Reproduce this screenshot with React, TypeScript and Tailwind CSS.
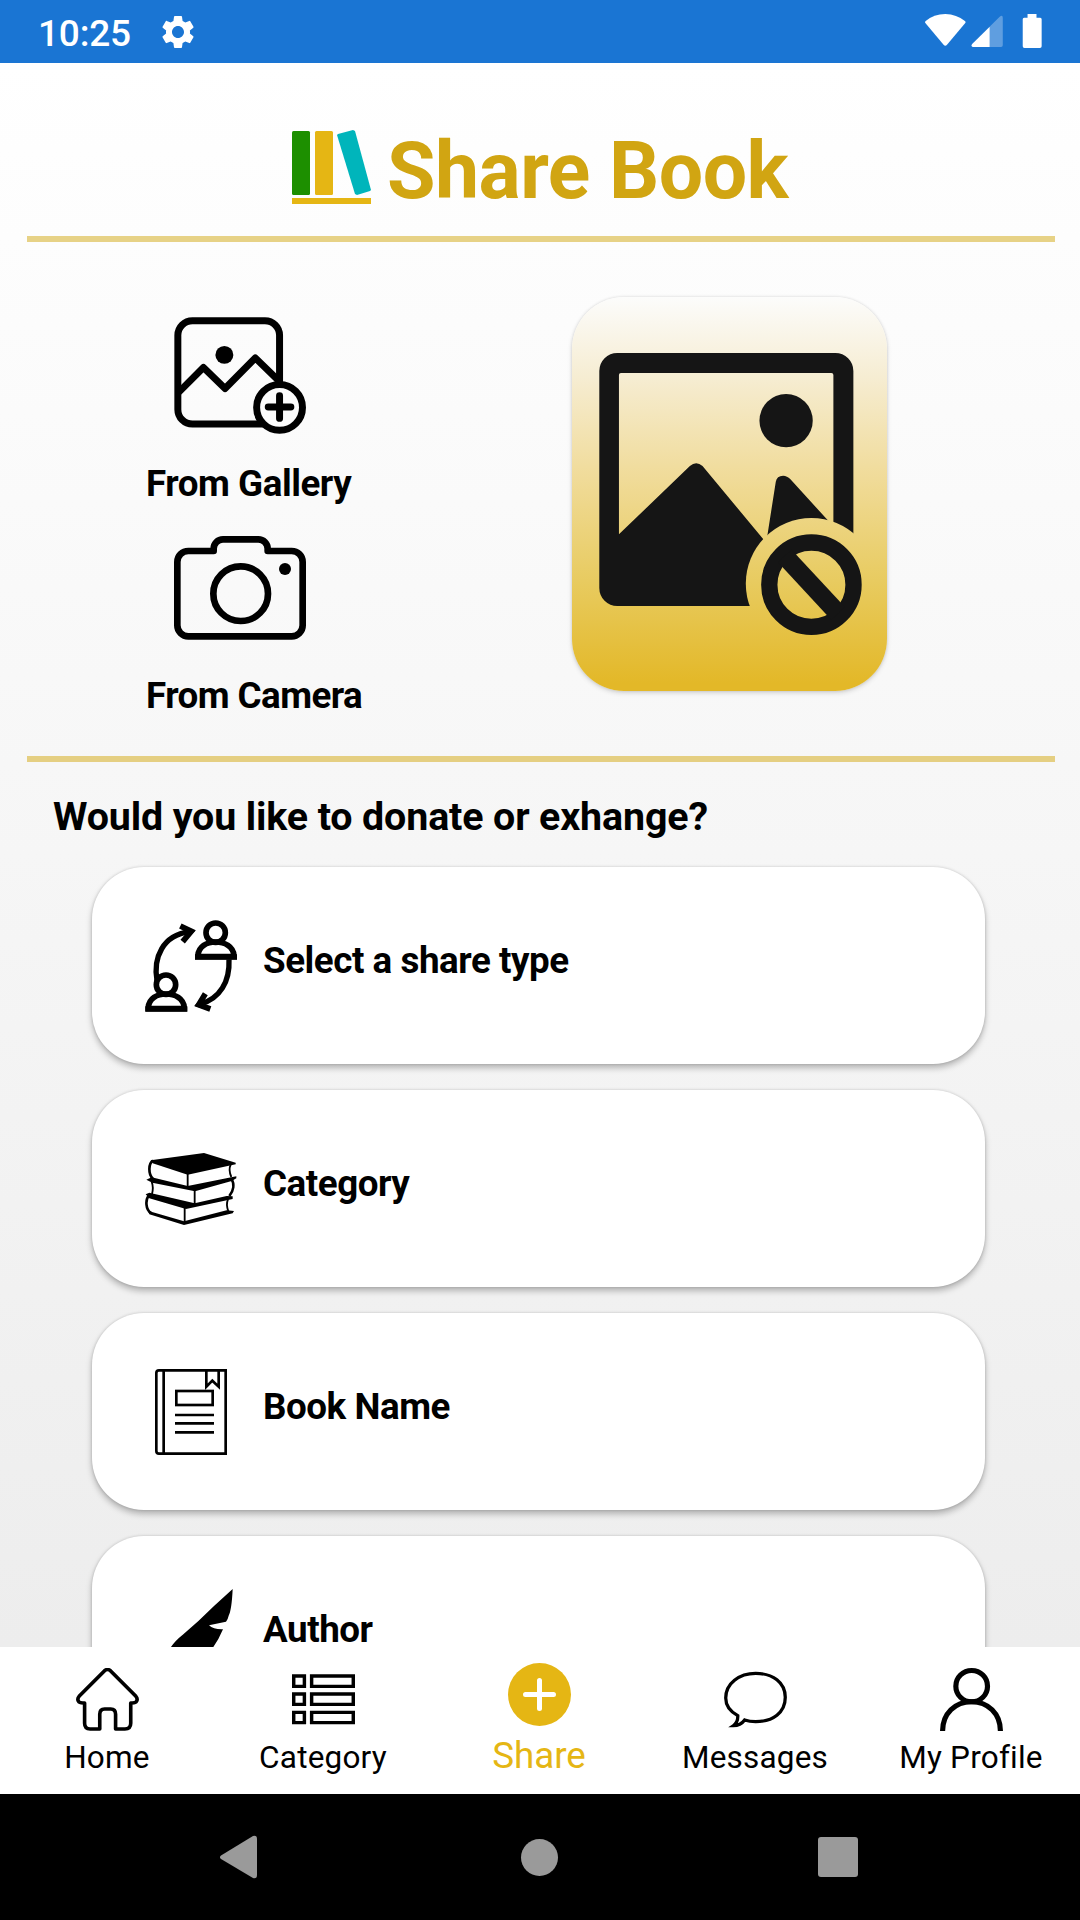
import type { ReactNode } from "react";
import { MdSettings } from "react-icons/md";

function StatusBar() {
  return (
    <div className="flex h-[63px] shrink-0 items-start justify-between bg-[#1a75d3] pl-[38px] pr-[38px] text-white">
      <div className="flex">
        <span className="mt-[12px] w-[120px] text-[37px] font-medium leading-[44px] tracking-[-0.2px]">10:25</span>
        <MdSettings className="mt-[12px] h-[40px] w-[40px]" />
      </div>
      <svg className="mt-[14px] h-[34px] w-[117px]" viewBox="1116 42 340 102" preserveAspectRatio="none" fill="white">
        <path d="M1117 69Q1115 66 1118 63Q1142 42 1175 42Q1208 43 1232 63Q1235 66 1233 69L1180 134Q1175 140 1170 134Z" />
        <path d="M1253 132L1333 50Q1342 44 1342 53V136Q1342 141 1337 141H1304V80Z" opacity=".3" />
        <path d="M1304 80V141H1255Q1248 138 1253 132Z" />
        <path d="M1414 42H1440V53H1451Q1455 53 1455 58V139Q1455 144 1450 144H1405Q1400 144 1400 139V58Q1400 53 1404 53H1414Z" />
      </svg>
    </div>
  );
}

function Logo() {
  return (
    <svg className="mt-[67px] h-[74px] w-[79px]" viewBox="0 0 79 74">
      <rect x="0" y="1" width="18" height="64" rx="1.5" fill="#1d8f00" />
      <rect x="23" y="1" width="18" height="64" rx="1.5" fill="#e5b614" />
      <path d="M46 4L61 0L63 1L79 60L78 61L65 65L63 64L45 5Z" fill="#00b5bb" />
      <rect x="0" y="68" width="79" height="6" fill="#e5b614" />
    </svg>
  );
}

function GalleryIcon() {
  return (
    <svg className="ml-[30px] h-[117px] w-[132px]" viewBox="162 82 396 352" fill="none" stroke="black" strokeWidth="21">
      <rect x="173" y="93" width="306" height="311" rx="44" />
      <path d="M176 308L250 234L315 297L406 205L479 276" strokeLinejoin="round" />
      <circle cx="313" cy="196" r="27" fill="black" stroke="none" />
      <circle cx="479" cy="354" r="69" fill="#fcfcfc" />
      <path d="M479 319V387M445 353H513" strokeLinecap="round" />
    </svg>
  );
}

function CameraIcon() {
  return (
    <svg className="ml-[30px] h-[104px] w-[132px]" viewBox="162 738 396 312" fill="none" stroke="black" strokeWidth="20">
      <path
        strokeLinejoin="round"
        d="M281 783H205A33 33 0 0 0 172 816V1006A33 33 0 0 0 205 1039H515A33 33 0 0 0 548 1006V816A33 33 0 0 0 515 783H443V776A28 28 0 0 0 415 748H309A28 28 0 0 0 281 776Z"
      />
      <circle cx="362" cy="911" r="82" />
      <circle cx="495" cy="837" r="18" fill="black" stroke="none" />
    </svg>
  );
}

function NoImage() {
  return (
    <svg className="h-full w-full" viewBox="66 51 946 1182" preserveAspectRatio="none" fill="#151515">
      <mask id="cut">
        <rect x="66" y="51" width="946" height="1182" fill="white" />
        <circle cx="785" cy="911" r="197" fill="black" />
      </mask>
      <g mask="url(#cut)">
        <path
          fillRule="evenodd"
          d="M202 219H857A54 54 0 0 1 911 273V978H202A54 54 0 0 1 148 924V273A54 54 0 0 1 202 219ZM213 279Q207 279 207 285V763L420 558Q439 541 458 558L640 777L700 850H851V285Q851 279 845 279Z"
        />
        <path d="M645 816L678 605Q681 587 700 587Q712 587 722 598L870 760L800 850Z" />
        <circle cx="709" cy="422" r="80" />
      </g>
      <circle cx="785" cy="914" r="126.500" fill="none" stroke="#151515" strokeWidth="49" />
      <path d="M705 828L865 1000" stroke="#151515" strokeWidth="56" />
    </svg>
  );
}

function Person() {
  return (
    <>
      <circle cx="407" cy="248" r="29" />
      <path d="M353.500 320V317C356 289 380 276 407 276C434 276 460 289 462 317V320Z" />
      <path d="M345 321H471" />
    </>
  );
}

function ExchangeIcon() {
  return (
    <svg className="h-[92px] w-[92px]" viewBox="195 210 276 276" fill="none" stroke="black" strokeWidth="17">
      <Person />
      <g transform="translate(-149 156)">
        <Person />
      </g>
      <path d="M231 392C219 322 248 256 328 245" strokeWidth="16" />
      <path d="M301 228L334 244L308 275" />
      <path d="M324 233L345 243L326 262Z" fill="black" stroke="none" />
      <path d="M447 328C450 395 420 445 362 462" strokeWidth="16" />
      <path d="M376 431L356 464L391 477" />
      <path d="M362 447L343 467L369 476Z" fill="black" stroke="none" />
    </svg>
  );
}

function BooksIcon() {
  return (
    <svg className="h-[92px] w-[92px]" viewBox="195 189 276 276" fill="black">
      <path d="M212 241L372 219L467 248V253L323 284L218 250Z" />
      <path d="M199 299L215 292L323 318L469 289V295L455 303L345 334L217 308Z" />
      <path d="M197 343L208 338L344 370L440 348L458 349V357L318 387L208 355Z" />
      <path d="M206 393L312 424L440 391L462 393L458 400L312 435L208 403Z" />
      <g fill="none" stroke="black" strokeWidth="8">
        <path d="M219 242C205 250 204 283 219 297" />
        <path d="M454 296C464 312 461 332 448 348" />
        <path d="M207 346C195 359 197 389 213 399" />
        <g strokeWidth="5.500">
          <path d="M323 280V322M344 328V373M314 382V430" />
          <path d="M452 254C446 267 449 280 454 291M215 305C220 319 219 331 216 342M444 358C438 371 441 383 445 394" />
        </g>
      </g>
    </svg>
  );
}

function BookIcon() {
  return (
    <svg className="h-[92px] w-[92px]" viewBox="195 198 276 276" fill="none" stroke="black" strokeWidth="8">
      <path d="M237 211H437V461H237Q229 461 229 453V219Q229 211 237 211ZM251 211V461" />
      <path d="M379 211V260L397 242L416 260V211" />
      <rect x="289" y="273" width="109" height="42" />
      <path d="M285 345H402M285 370H402M285 397H402" />
    </svg>
  );
}

function FeatherIcon() {
  return (
    <svg className="h-[92px] w-[92px]" viewBox="195 207 276 276" fill="black">
      <path d="M458 207Q455 270 446 287Q443 300 438 305L387 316Q400 329 429 328Q417 357 400 381Q380 420 300 430L250 470L245 460L268 420Q260 400 273 381Q285 363 310 343Q355 305 402 258Z" />
    </svg>
  );
}

function Field({ icon, label }: { icon: ReactNode; label: string }) {
  return (
    <div className="flex h-[197px] shrink-0 items-start rounded-[52px] bg-white pl-[53px] pt-[53px] shadow-[0_4px_6px_rgba(0,0,0,0.26),0_0_3px_rgba(0,0,0,0.16)]">
      {icon}
      <span className="ml-[26px] mt-[19px] text-[36.75px] font-bold leading-[44px] tracking-[-0.45px]">{label}</span>
    </div>
  );
}

function Tab({ icon, label, active = false }: { icon: ReactNode; label: string; active?: boolean }) {
  return active ? (
    <div className="flex w-[216px] flex-col items-center pt-[16px] text-[#e5b614]">
      {icon}
      <span className="mt-[8px] text-[36.75px] leading-[44px]">{label}</span>
    </div>
  ) : (
    <div className="flex w-[216px] flex-col items-center pt-[21px]">
      {icon}
      <span className="mt-[7px] whitespace-nowrap text-[31.5px] leading-[40px] tracking-[0.2px]">{label}</span>
    </div>
  );
}

function HomeIcon() {
  return (
    <svg className="h-[63px] w-[63px]" viewBox="221 84 183 189" preserveAspectRatio="none" fill="none" stroke="black" strokeWidth="10.500" strokeLinejoin="round">
      <path d="M304 92Q312.500 85 321 92L395 169Q401 176 397 184Q394 190 380 189V250Q380 267 363 267H336V223Q336 207 322 207H304Q290 207 290 223V267H262Q246 267 246 250V189Q231 190 228 184Q224 176 230 169Z" />
    </svg>
  );
}

function ListIcon() {
  return (
    <svg className="h-[63px] w-[63px]" viewBox="848 84 183 189" preserveAspectRatio="none" fill="none" stroke="black" strokeWidth="10">
      <path d="M853 108H884V139H853ZM905 108H1026V139H905ZM853 162H884V193H853ZM905 162H1026V193H905ZM853 217H884V248H853ZM905 217H1026V248H905Z" />
    </svg>
  );
}

function PlusIcon() {
  return (
    <svg className="h-[63px] w-[63px]" viewBox="0 0 63 63">
      <circle cx="31.500" cy="31.500" r="31.500" fill="#e5b614" />
      <path d="M31.500 17.500V45.500M17.500 31.500H45.500" stroke="white" strokeWidth="5" strokeLinecap="round" />
    </svg>
  );
}

function MessageIcon() {
  return (
    <svg className="h-[63px] w-[63px]" viewBox="534 84 183 189" preserveAspectRatio="none" fill="none" stroke="black" strokeWidth="9.500">
      <path d="M574 227C551 214 539 196 539 174C539 130 578 100 626 100C676 100 712 128 712 172C712 218 676 245 626 245Q608 245 594 240Q582 257 561 257Q575 247 574 227Z" />
    </svg>
  );
}

function ProfileIcon() {
  return (
    <svg className="h-[63px] w-[63px]" viewBox="1161 84 183 189" preserveAspectRatio="none" fill="none" stroke="black" strokeWidth="15">
      <ellipse cx="1253" cy="138.500" rx="46" ry="47" />
      <path d="M1168.500 273C1168.500 220 1205 185 1252.500 185C1300 185 1336.500 220 1336.500 273" />
    </svg>
  );
}

export default function App() {
  return (
    <div className="flex h-[1920px] w-[1080px] flex-col overflow-hidden font-['Roboto',sans-serif] text-black">
      <StatusBar />

      <main className="flex h-[1584px] shrink-0 flex-col overflow-hidden bg-linear-to-b from-white to-[#ededed]">
        <header className="ml-[27px] mr-[25px] flex h-[179px] shrink-0 items-start border-b-6 border-[#e7d286] pl-[265px]">
          <Logo />
          <h1 className="ml-[16px] mt-[62px] whitespace-nowrap text-[78.75px] font-bold leading-[92px] tracking-[-0.5px] text-[#d1a512]">Share Book</h1>
        </header>

        <section className="ml-[27px] mr-[25px] flex h-[520px] shrink-0 border-b-6 border-[#e5cf82]">
          <div className="flex w-[545px] flex-col items-start pl-[117px] pt-[75px]">
            <GalleryIcon />
            <span className="ml-[2px] mt-[28px] text-[36.75px] font-bold leading-[44px] tracking-[-0.45px]">From Gallery</span>
            <div className="mt-[30px]">
              <CameraIcon />
            </div>
            <span className="ml-[2px] mt-[34px] text-[36.75px] font-bold leading-[44px] tracking-[-0.55px]">From Camera</span>
          </div>
          <div className="mt-[55px] h-[394px] w-[315px] overflow-hidden rounded-[52px] bg-[linear-gradient(#fcfcfb_0%,#f6edd3_20%,#f1dd9f_43%,#e8cb60_72%,#e3b828_98%)] shadow-[0_2px_5px_rgba(0,0,0,0.14),0_0_3px_rgba(0,0,0,0.12)]">
            <NoImage />
          </div>
        </section>

        <h2 className="ml-[53px] mt-[31px] shrink-0 whitespace-nowrap text-[39.4px] font-bold leading-[48px] tracking-[-0.14px]">Would you like to donate or exhange?</h2>

        <div className="ml-[92px] mr-[95px] mt-[26px] flex flex-col gap-[26px]">
          <Field icon={<ExchangeIcon />} label="Select a share type" />
          <Field icon={<BooksIcon />} label="Category" />
          <Field icon={<BookIcon />} label="Book Name" />
          <Field icon={<FeatherIcon />} label="Author" />
        </div>
      </main>

      <nav className="flex h-[147px] shrink-0 bg-white">
        <div className="-ml-px flex">
          <Tab icon={<HomeIcon />} label="Home" />
          <Tab icon={<ListIcon />} label="Category" />
          <Tab icon={<PlusIcon />} label="Share" active />
          <Tab icon={<MessageIcon />} label="Messages" />
          <Tab icon={<ProfileIcon />} label="My Profile" />
        </div>
      </nav>

      <div className="flex h-[126px] shrink-0 items-center justify-between bg-black pl-[220px] pr-[222px]">
        <svg className="h-[44px] w-[37px]" viewBox="0 0 37 44" fill="#9a9a9a">
          <path d="M1 20.500L33 1Q37 0 37 4V40Q37 44 33 43L1 24Q-1 22 1 20.500Z" />
        </svg>
        <div className="ml-[3px] h-[37px] w-[37px] rounded-full bg-[#9a9a9a]" />
        <div className="h-[40px] w-[40px] rounded-[3px] bg-[#9a9a9a]" />
      </div>
    </div>
  );
}
